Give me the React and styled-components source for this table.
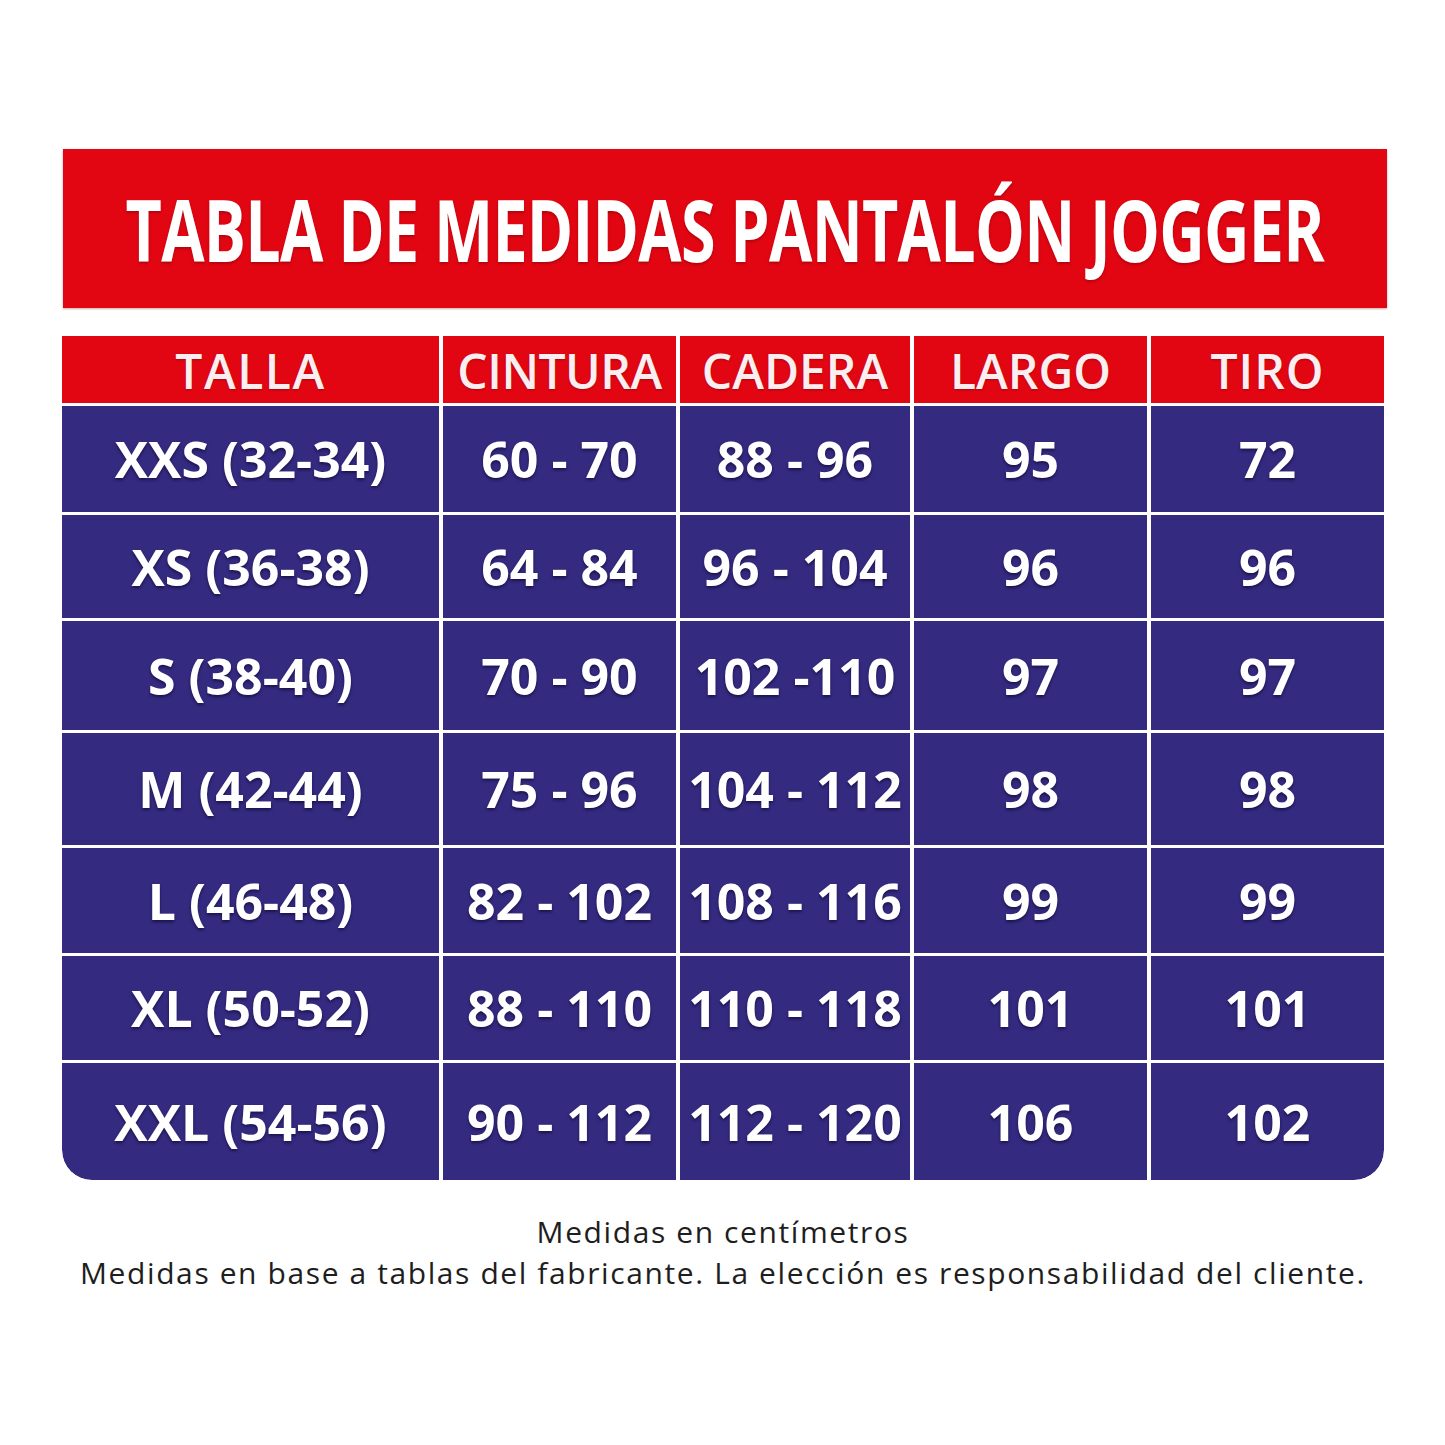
import React from "react";
import styled, { createGlobalStyle } from "styled-components";

const Global = createGlobalStyle`
  html, body { margin: 0; padding: 0; background: #ffffff; overflow: hidden; }
  body { font-family: "Open Sans", "Liberation Sans", sans-serif; }
`;

const Page = styled.div`
  width: 1445px;
  height: 1445px;
  box-sizing: border-box;
  padding: 149px 0 0 62px;
  background: #ffffff;
  overflow: hidden;
`;

const Banner = styled.div`
  width: 1324px;
  height: 159px;
  margin-left: 1px;
  background: #e20613;
  display: flex;
  align-items: center;
  justify-content: center;
  overflow: hidden;
  box-shadow: 0 1px 2px rgba(120, 0, 0, 0.35);
`;

const Squeeze = styled.span`
  display: inline-block;
  transform: scaleX(${(p) => p.$sx});
  transform-origin: center;
  white-space: nowrap;
`;

const Title = styled.h1`
  margin: 0;
  flex: none;
  color: #ffffff;
  font-family: "Open Sans", sans-serif;
  font-weight: 700;
  font-size: 86px;
  line-height: 1;
  letter-spacing: -1px;
  text-shadow: 0 2px 3px rgba(90, 0, 0, 0.35);
`;

const Table = styled.div`
  margin-top: 28px;
  width: 1322px;
  display: grid;
  grid-template-columns: 377px 233px 230px 233px 233px;
  grid-template-rows: 67px 106px 103px 109px 112px 105px 104px 117px;
  column-gap: 4px;
  row-gap: 3px;
  background: #ffffff;
  border-radius: 0 0 30px 30px;
  overflow: hidden;
`;

const HeadCell = styled.div`
  background: #e20613;
  color: #fbeef0;
  display: flex;
  align-items: center;
  justify-content: center;
  font-family: "Open Sans", sans-serif;
  font-weight: 600;
  font-size: 48px;
  letter-spacing: ${(p) => p.$ls || "0px"};
  padding-top: 2px;
  text-shadow: 0 1px 2px rgba(90, 0, 0, 0.4);
`;

const Cell = styled.div`
  background: #342a80;
  color: #ffffff;
  display: flex;
  align-items: center;
  justify-content: center;
  font-family: "Open Sans", sans-serif;
  font-weight: 700;
  font-size: 50px;
  white-space: nowrap;
  text-shadow: 0 2px 3px rgba(10, 5, 40, 0.6);
  border-radius: ${(p) =>
    p.$corner === "left" ? "0 0 0 30px" : p.$corner === "right" ? "0 0 30px 0" : "0"};
`;

const Footer = styled.div`
  width: 1322px;
  margin-top: 31px;
  display: flex;
  flex-direction: column;
  align-items: center;
  color: #1e1e1e;
  font-family: "Open Sans", sans-serif;
  font-size: 30px;
  letter-spacing: 1.6px;
  line-height: 41px;
`;

const FooterLine = styled.div`
  white-space: nowrap;
`;

const headers = [
  { t: "TALLA", ls: "1.5px" },
  { t: "CINTURA", ls: "-0.5px" },
  { t: "CADERA", ls: "0px" },
  { t: "LARGO", ls: "0px" },
  { t: "TIRO", ls: "1px" },
];
const rows = [
  ["XXS (32-34)", "60 - 70", "88 - 96", "95", "72"],
  ["XS (36-38)", "64 - 84", "96 - 104", "96", "96"],
  ["S (38-40)", "70 - 90", "102 -110", "97", "97"],
  ["M (42-44)", "75 - 96", "104 - 112", "98", "98"],
  ["L (46-48)", "82 - 102", "108 - 116", "99", "99"],
  ["XL (50-52)", "88 - 110", "110 - 118", "101", "101"],
  ["XXL (54-56)", "90 - 112", "112 - 120", "106", "102"],
];

export default function App() {
  return (
    <Page>
      <Global />
      <Banner>
        <Title>
          <Squeeze $sx={0.73}>TABLA DE MEDIDAS PANTALÓN JOGGER</Squeeze>
        </Title>
      </Banner>
      <Table>
        {headers.map((h) => (
          <HeadCell key={h.t} $ls={h.ls}>
            {h.t}
          </HeadCell>
        ))}
        {rows.map((r, ri) =>
          r.map((v, ci) => (
            <Cell
              key={`${ri}-${ci}`}
              $corner={
                ri === rows.length - 1 && ci === 0
                  ? "left"
                  : ri === rows.length - 1 && ci === r.length - 1
                  ? "right"
                  : undefined
              }
            >
              {v}
            </Cell>
          ))
        )}
      </Table>
      <Footer>
        <FooterLine>Medidas en centímetros</FooterLine>
        <FooterLine>
          Medidas en base a tablas del fabricante. La elección es responsabilidad del cliente.
        </FooterLine>
      </Footer>
    </Page>
  );
}
